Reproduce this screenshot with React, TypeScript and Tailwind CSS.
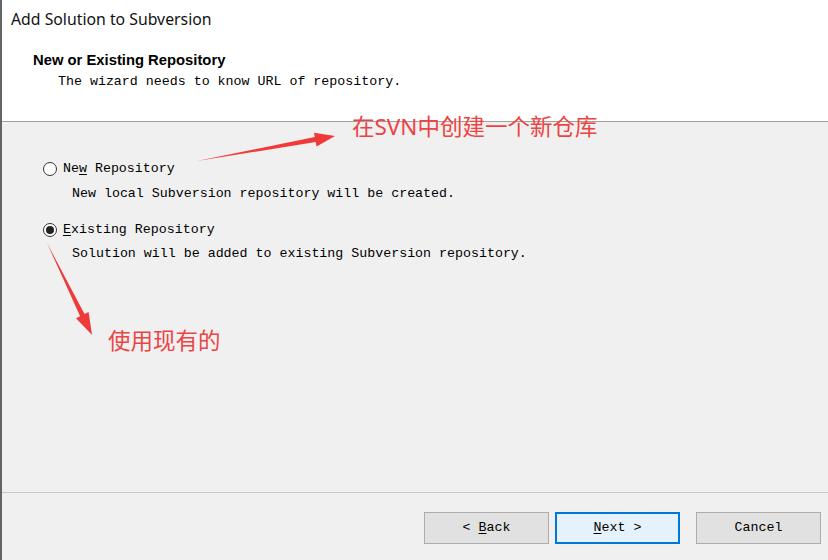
import React from 'react';

const mono = { fontFamily: '"Liberation Mono", "DejaVu Sans Mono", monospace' };

const Radio = ({ checked }: { checked?: boolean }) => (
  <span className="w-[14px] h-[14px] rounded-full border border-[#333] bg-white flex items-center justify-center shrink-0">
    {checked && <span className="w-[8px] h-[8px] rounded-full bg-[#222]" />}
  </span>
);

const Button = ({ children, primary }: { children: React.ReactNode; primary?: boolean }) => (
  <button
    className={
      primary
        ? 'w-[125px] h-[32px] border-2 border-[#0078d7] bg-[#e5f1fb] text-[13.3px] text-black'
        : 'w-[125px] h-[32px] border border-[#adadad] bg-[#e1e1e1] text-[13.3px] text-black'
    }
    style={mono}
  >
    {children}
  </button>
);

export default function App() {
  return (
    <div
      className="relative w-[828px] h-[560px] overflow-hidden bg-[#f0f0f0] border-l-2 border-[#646464] flex flex-col"
      style={{ fontFamily: '"Liberation Sans", Arial, sans-serif' }}
    >
      {/* Header */}
      <div className="h-[122px] bg-white border-b border-[#a0a0a0] shrink-0">
        <div className="pl-[9px] pt-[9px] h-[20px] leading-[20px] text-[15.8px] text-[#111]" style={{ fontFamily: '"Noto Sans", "Open Sans", sans-serif' }}>
          Add Solution to Subversion
        </div>
        <div className="pl-[31px] mt-[31px] text-[14.8px] font-bold leading-[18px] text-black">New or Existing Repository</div>
        <div className="pl-[56px] mt-[4px] text-[13.3px] leading-[18px] text-black" style={mono}>
          The wizard needs to know URL of repository.
        </div>
      </div>

      {/* Options */}
      <div className="flex-1 pl-[41px] pt-[39px] text-[13.3px] text-black" style={mono}>
        <div className="flex items-center gap-[6px] h-[16px]">
          <Radio />
          <span>
            Ne<span className="underline underline-offset-2">w</span> Repository
          </span>
        </div>
        <div className="pl-[29px] mt-[9px] h-[16px] leading-[16px]">New local Subversion repository will be created.</div>
        <div className="flex items-center gap-[6px] h-[16px] mt-[20px]">
          <Radio checked />
          <span>
            <span className="underline underline-offset-2">E</span>xisting Repository
          </span>
        </div>
        <div className="pl-[29px] mt-[8px] h-[16px] leading-[16px]">Solution will be added to existing Subversion repository.</div>
      </div>

      {/* Footer */}
      <div className="h-[68px] border-t border-[#c8c8c8] shrink-0 flex items-center justify-end pr-[7px] pt-[2px]">
        <Button>
          &lt; <span className="underline underline-offset-2">B</span>ack
        </Button>
        <div className="ml-[6px]">
          <Button primary>
            <span className="underline underline-offset-2">N</span>ext &gt;
          </Button>
        </div>
        <div className="ml-[16px]">
          <Button>Cancel</Button>
        </div>
      </div>

      {/* Annotations */}
      <svg className="absolute left-0 top-0 pointer-events-none" width="828" height="560">
        <polygon points="195,161 313.7,142.1 314.6,146.5 333,136 312,132.7 312.8,137.1" fill="#f03a3a" />
        <polygon points="45,243 78.1,316.3 74,318.3 90,335 86.6,312.1 82.5,314.1" fill="#f03a3a" />
      </svg>
      <div
        className="absolute left-[350px] top-[112px] text-[22.5px] leading-[30px] text-[#ec4444]"
        style={{ fontFamily: '"Noto Sans", "Noto Sans CJK SC", sans-serif' }}
      >
        在SVN中创建一个新仓库
      </div>
      <div
        className="absolute left-[106px] top-[324px] text-[22.5px] leading-[30px] text-[#ec4444]"
        style={{ fontFamily: '"Noto Sans CJK SC", sans-serif' }}
      >
        使用现有的
      </div>
    </div>
  );
}
